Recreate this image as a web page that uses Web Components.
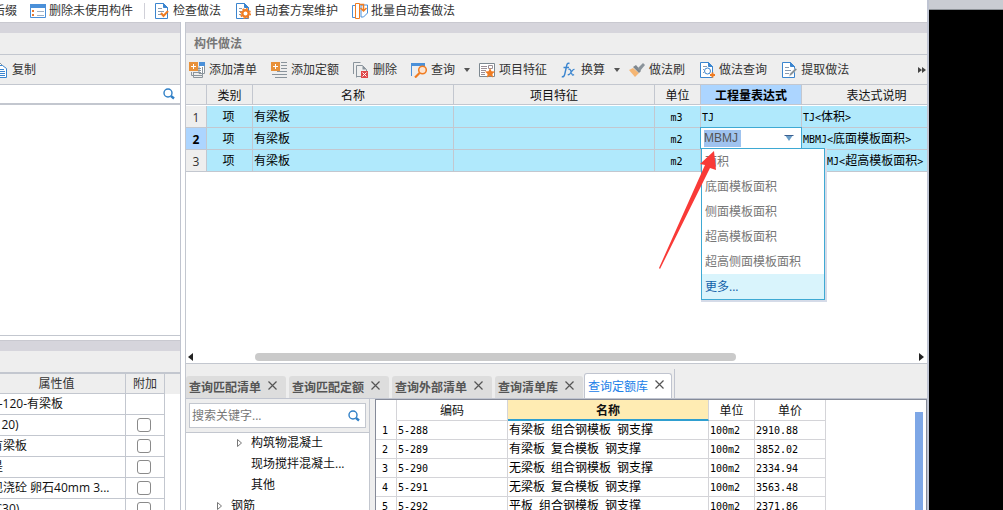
<!DOCTYPE html>
<html lang="zh-CN">
<head>
<meta charset="utf-8">
<title>构件做法</title>
<style>
html,body{margin:0;height:100%}
body{background:#fff;color:#222;font:12px/20px "Open Sans","Noto Sans CJK SC",sans-serif;overflow:hidden}
</style>
</head>
<body>
<qty-app></qty-app>
<script>
const BASE = `
*{box-sizing:border-box}
button,input{font:inherit;color:inherit;border:0;background:none;padding:0;margin:0;outline:0}
button{white-space:nowrap}
.m{font-family:"DejaVu Sans Mono",monospace;font-size:10px;line-height:1px}
table{border-spacing:0;table-layout:fixed}
td,th{padding:0;font-weight:400;white-space:nowrap}
`;
function define(name, css, html) {
  customElements.define(name, class extends HTMLElement {
    constructor() {
      super();
      this.attachShadow({mode: 'open'});
    }
    connectedCallback() {
      const body = typeof html === 'function' ? html(this) : html;
      this.shadowRoot.innerHTML = `<style>${BASE}${css}</style>${body}`;
    }
  });
}
const mono = s => s.replace(/[\x20-\x7e]+/g, r => `<span class="m">${r.replace(/</g, '&lt;').replace(/>/g, '&gt;')}</span>`);

const page = '<path d="M1.5 .5h8l4 4v11h-12z" fill="#fff" stroke="#3b85cf"/><path d="M9.500 .5v4h4z" fill="#3b85cf" stroke="#3b85cf"/>';
const ICONS = {
  list: '<path d="M.5 1.500h15v13H.5z" fill="#fff" stroke="#4a90d9"/><path d="M0 1h16v4H0z" fill="#4a90d9"/><path d="M2 7l2 2m0-2l-2 2m0 2l2 2m0-2l-2 2" stroke="#e8772e"/><path d="M7 8.500h7M7 12.500h7" stroke="#9fb0c4"/>',
  check: page + '<path d="M4 5.500h4M4 8.500h6M4 11.500h3" stroke="#8a9bb0"/><path d="M7 10l2.500 3L14 8" fill="none" stroke="#f07c22" stroke-width="2"/>',
  gear: page + '<path d="M4 5.500h3M4 8.500h3M4 11.500h2" stroke="#8a9bb0"/><circle cx="10.500" cy="10.500" r="3.200" fill="#fff" stroke="#f07c22" stroke-width="2.400"/><circle cx="10.500" cy="10.500" r="4.800" fill="none" stroke="#f07c22" stroke-width="1.500" stroke-dasharray="1.885 1.885"/>',
  batch: '<path d="M.5 2.500h3v12h-3zM15.500 2v8l-4 4H9V2z" fill="#fff" stroke="#4a90d9"/><path d="M3.500 .5h4v15h-4z" fill="#fff" stroke="#f07c22"/><path d="M7 1.500h4.500V7M8.500 5l3 3 3-3" fill="none" stroke="#f07c22" stroke-width="1.500"/>',
  copy: '<path d="M1.500 .5h6l3 3v9h-9z" fill="#fff" stroke="#8a949c"/><path d="M4.500 3.500h6l4 3v9h-10z" fill="#fff" stroke="#3b85cf"/><path d="M6 7.500h6M6 9.500h7M6 11.500h7M6 13.500h7" stroke="#3b85cf"/>',
  addlist: '<path d="M10 4.500v7h5.500V2" fill="#fff" stroke="#8a949c"/><path d="M10 0h6v4h-6z" fill="#4a90d9"/><path d="M4.500 10v5.500h9v-2M2.500 10v3.500h11V5M9 6.500h3M9 8.500h3M5 10.500h7" fill="none" stroke="#8a949c"/><path d="M0 0h9v9H0z" fill="#e8913a"/><path d="M4.500 2v5M2 4.500h5" stroke="#fff"/>',
  addnorm: '<path d="M10 .5h6M10 3.500h6M10 6.500h6M6 9.500h10M1 12.500h15M4 15.500h12" stroke="#8a949c"/><path d="M0 0h9v9H0z" fill="#e8913a"/><path d="M4.500 2v5M2 4.500h5" stroke="#fff"/>',
  del: '<path d="M.5 12V.5h7M3.500 15.500v-12h6l4 4V9M3.500 14.500H8" fill="none" stroke="#8a949c"/><path d="M9.500 3.500v4h4z" fill="#8a949c"/><path d="M8 9h7v7H8z" fill="#e0484a"/><path d="M9.500 10.500l4 4m0-4l-4 4" stroke="#fff"/>',
  query: '<path d="M.5 14V1.500h13V5" fill="none" stroke="#4a90d9"/><path d="M0 1h14v3H0z" fill="#4a90d9"/><circle cx="11.500" cy="8" r="3.800" fill="#fbe3d0" stroke="#f07c22" stroke-width="1.500"/><path d="M8.500 11L4 15.500" stroke="#f07c22" stroke-width="2.200"/>',
  feature: '<path d="M.5 1.500h15v13H.5z" fill="#fff" stroke="#7d8890"/><path d="M2 4.500h6M2 6.500h6M2 8.500h5M2 10.500h4M2 12.500h4M9.500 3.500h4v3h-4z" stroke="#9b8f96"/><path d="M11 6l1.500 3.200 3.500.4-2.600 2.400.7 3.500-3.100-1.700-3.100 1.700.7-3.500L6 9.600l3.500-.4z" fill="#f07c22"/>',
  fx: '<path d="M8.500 1.500Q6.500 .5 5.800 3L3.800 12Q3 15.500 .8 14.500M2.500 5.500h5.500" fill="none" stroke="#3b85cf" stroke-width="1.400"/><path d="M7.500 7.500q1.500-1 2.300 1.200l1 3.200q.6 2 2.200.6M13.500 7.500q-1-.5-2.200 1.200l-2.200 3q-1.200 1.500-2.400.8" fill="none" stroke="#3b85cf" stroke-width="1.300"/>',
  brush: '<path d="M0 8l4-2 6 5-4 4z" fill="#f5b674"/><path d="M4 5l3-2 5 6-2 2z" fill="#7f878e"/><path d="M8.500 6.500L14 1l2 2-5 6z" fill="#8b949b"/>',
  find: page + '<path d="M4 4.500h4M4 7.500h1M4 10.500h1" stroke="#8a9bb0"/><circle cx="8.500" cy="9" r="3" fill="#fff" stroke="#3b85cf"/><path d="M10.500 11.500l2 2" stroke="#3b85cf"/><path d="M13.500 10.500v5M11 13h5" stroke="#f07c22" stroke-width="2"/>',
  extract: page + '<path d="M4 5.500h4M4 8.500h6M4 11.500h4" stroke="#8a9bb0"/><path d="M8 14.500l1-3 5.500-5.500L16 7.500 10.500 13z" fill="#7d8890" stroke="#eee" stroke-width=".5"/>',
  search: '<circle cx="7" cy="7" r="4" fill="none" stroke="#2f7fc6" stroke-width="1.400"/><path d="M10 10l3 2.500" stroke="#2f7fc6" stroke-width="2.400"/>'
};

define('ui-icon', ':host{display:block;flex:none;width:16px;height:16px}svg{display:block;overflow:hidden}',
  el => `<svg width="16" height="16" viewBox="0 0 16 16" fill="none" aria-hidden="true">${ICONS[el.getAttribute('name')]}</svg>`);

define('tool-button', `
:host{display:block;flex:none;padding-right:14px}
:host([menu]){padding-right:9px}
button{display:flex;align-items:center;gap:var(--icon-gap,4px);height:20px;color:#333}
i{width:0;margin-left:5px;border:3px solid transparent;border-top:4px solid #555;border-bottom:0}
`, el => `<button type="button"><ui-icon name="${el.getAttribute('icon')}"></ui-icon><span><slot></slot></span>${el.hasAttribute('menu') ? '<i></i>' : ''}</button>`);

define('main-toolbar', `
:host{display:flex;align-items:center;height:22px;background:#fff;overflow:hidden;--icon-gap:3px}
.cut{margin-left:-7px;margin-right:13px;color:#333}
hr{flex:none;width:1px;height:16px;border:0;margin:0 9px 0 -3px;background:#d0d0d8}
`, `<button type="button" class="cut">后缀</button>
<tool-button icon="list">删除未使用构件</tool-button><hr>
<tool-button icon="check">检查做法</tool-button>
<tool-button icon="gear">自动套方案维护</tool-button>
<tool-button icon="batch">批量自动套做法</tool-button>`);

define('panel-head', `
:host{display:block;border-top:1px solid #c9c9d0}
.band{height:10px;background:#d6d5dc}
h2{margin:0;height:21px;background:#eee;color:#777;font-size:12px;font-weight:700;line-height:22px;padding-left:8px}
`, '<div class="band"></div><h2><slot></slot></h2>');

define('property-grid', `
:host{display:block;border-top:2px solid #c3c7cf;background:#fff}
.head{display:flow-root;background:#eee}
table{width:177px;margin-left:-12px;color:#111}
.v{width:138px}
th{height:20px;line-height:19px;color:#333;border:1px solid #c3c7cf;border-width:0 1px 1px 0;background:#eee}
td{height:21px;line-height:20px;border:1px solid #c3c7cf;border-width:0 1px 1px 0;padding-left:3px;overflow:hidden}
td:last-child{padding:0 2px 0 0}
input{appearance:none;display:block;width:14px;height:14px;margin:0 auto;border:1px solid #8a8a8a;border-radius:3px;background:#fff}
`, () => {
  const rows = ['B-120-有梁板', '(120)', '有梁板', '是', '现浇砼 卵石40mm 3...', '(C30)'];
  return `<div class="head"><table><colgroup><col class="v"><col></colgroup><thead><tr><th>属性值</th><th>附加</th></tr></thead></table></div>
  <table><colgroup><col class="v"><col></colgroup><tbody>${rows.map((r, i) => `<tr><td>${r}</td><td>${i ? `<input type="checkbox" aria-label="附加 ${r}">` : ''}</td></tr>`).join('')}</tbody></table>`;
});

define('side-panel', `
:host{display:grid;grid-template-rows:1fr 170px;border-right:1px solid #c0c4cf;min-height:0;overflow:hidden}
.top{display:flex;flex-direction:column;border-bottom:1px solid #c3c7cf;margin-bottom:4px;background:#fff}
.tools{display:flex;align-items:center;height:31px;background:#eee;border:1px solid #c3c7cf;border-width:1px 0;overflow:hidden}
.tools tool-button{margin-left:-8px}
.search{display:flex;align-items:center;height:20px;border-bottom:2px solid #c3c7cf;padding-right:3px}
.search input{flex:1;min-width:0}
`, `<section class="top"><panel-head></panel-head>
<div class="tools"><tool-button icon="copy">复制</tool-button></div>
<div class="search"><input type="text" aria-label="搜索构件"><ui-icon name="search"></ui-icon></div></section>
<section><panel-head></panel-head><property-grid></property-grid></section>`);

define('method-toolbar', `
:host{display:flex;align-items:center;height:31px;padding-left:3px;background:#eee;border:1px solid #c3c7cf;border-width:1px 0;overflow:hidden}
.more{margin-left:auto;display:flex;height:20px;align-items:center;padding-right:1px}
.more svg{display:block}
`, `<tool-button icon="addlist">添加清单</tool-button><tool-button icon="addnorm">添加定额</tool-button>
<tool-button icon="del">删除</tool-button><tool-button icon="query" menu>查询</tool-button>
<tool-button icon="feature">项目特征</tool-button><tool-button icon="fx" menu>换算</tool-button>
<tool-button icon="brush">做法刷</tool-button><tool-button icon="find">做法查询</tool-button>
<tool-button icon="extract">提取做法</tool-button>
<button type="button" class="more" aria-label="更多工具"><svg width="8" height="6"><path d="M0 0l4 3-4 3zM4 0l4 3-4 3z" fill="#444"/></svg></button>`);

define('expression-picker', `
:host{display:block;position:relative;height:22px;margin:-1px -1px 0 -1px;z-index:3}
.box{display:flex;align-items:center;height:22px;background:#fff;border:1px solid #3ea9d3;padding:0 7px 0 3px}
input{width:37px;height:17px;background:#9fc3ef;color:#555;line-height:17px;font-family:"Liberation Sans",sans-serif}
.box button{margin-left:auto;display:block}
.box svg{display:block}
ul{position:absolute;left:1px;top:21px;width:124px;margin:0;padding:0;list-style:none;background:#fff;border:1px solid #3ea9d3;box-shadow:1px 1px 0 1px #d5dbe8}
li{height:25px;line-height:25px;padding-left:3px;color:#777;text-align:left}
li[aria-selected]{background:#d9f4fc;color:#1261a9}
.arrow{position:absolute;left:-41px;top:23px;pointer-events:none}
`, `<div class="box"><input type="text" value="MBMJ" role="combobox" aria-expanded="true" aria-label="工程量表达式"><button type="button" aria-label="展开"><svg width="10" height="6"><path d="M1 0h8L5 6z" fill="#6b9fc9"/><path d="M0 0h10L9 1H1z" fill="#3b5f8f"/></svg></button></div>
<ul role="listbox" aria-label="工程量代码">${['面积', '底面模板面积', '侧面模板面积', '超高模板面积', '超高侧面模板面积'].map(t => `<li role="option">${t}</li>`).join('')}<li role="option" aria-selected="true">更多...</li></ul>
<svg class="arrow" width="60" height="122" aria-hidden="true"><path d="M55 1L41 14l5 1L0 118l1 1L51 18l6 2z" fill="#f93a37"/></svg>`);

define('method-grid', `
:host{display:flex;flex-direction:column;flex:1;min-height:0;background:#fff;border-bottom:1px solid #c3c7cf}
.wrap{flex:1;min-height:0;overflow:hidden}
table{width:calc(100% + 24px);color:#111}
th{height:20px;line-height:17px;padding-top:2px;background:#eee;border:1px solid #c3c7cf;border-width:0 1px 1px 0}
thead th{box-shadow:0 1px #fff}
tbody::before{content:"";display:block;height:1px}
td{height:22px;line-height:20px;background:#b0e9fc;border:1px solid #c3c7cf;border-width:0 1px 1px 0;padding-left:1px;color:#000}
tbody th{height:22px;color:#333}
.sel{background:#acd5ff;font-weight:700;color:#000}
.c{text-align:center;padding:0 2px 0 0}
.edit{padding:0}
th:last-child,td:last-child{border-right:0}
.scroll{display:grid;grid-template-columns:5px 1fr 5px;align-items:center;height:13px;margin:0 3px 0 2px}
.track{padding:0 183px 0 62px}
.thumb{height:8px;border-radius:4px;background:#cacaca}
.scroll svg{display:block}
`, () => {
  const rows = [['m3', 'TJ', 'TJ<体积>'], ['m2', null, 'MBMJ<底面模板面积>'], ['m2', '', 'CGMBMJ<超高模板面积>']];
  return `<div class="wrap"><table><colgroup><col style="width:21px"><col style="width:46px"><col style="width:201px"><col style="width:201px"><col style="width:46px"><col style="width:101px"><col></colgroup>
<thead><tr><th></th><th>类别</th><th>名称</th><th>项目特征</th><th>单位</th><th class="sel">工程量表达式</th><th>表达式说明</th></tr></thead>
<tbody>${rows.map((r, i) => `<tr><th class="${i === 1 ? 'sel' : ''}">${i + 1}</th><td class="c">项</td><td>有梁板</td><td></td><td class="c">${mono(r[0])}</td>${r[1] === null ? '<td class="edit"><expression-picker></expression-picker></td>' : `<td>${mono(r[1])}</td>`}<td>${mono(r[2])}</td></tr>`).join('')}</tbody></table></div>
<div class="scroll"><svg width="5" height="8"><path d="M5 0v8L0 4z" fill="#222"/></svg><div class="track"><div class="thumb"></div></div><svg width="5" height="8"><path d="M0 0v8l5-4z" fill="#222"/></svg></div>`;
});

define('query-tab', `
:host{display:flex;align-items:center;height:22px;padding:1px 9px 0 3px;background:#ddd;border-radius:3px 3px 0 0;color:#555;gap:7px;font-weight:700}
:host([active]){height:25px;background:#fff;color:#2080e8;border:1px solid #c0c4cf;border-bottom:0;padding:1px 7px 0 3px;margin-left:-2px;font-weight:400}
button{display:block;height:20px}
.x svg{display:block;margin-bottom:4px}
.x{display:flex;align-items:center}
`, el => `<button type="button" role="tab" aria-selected="${el.hasAttribute('active')}"><slot></slot></button><button type="button" class="x" aria-label="关闭"><svg width="9" height="9"><path d="M.5 .5l8 8m0-8l-8 8" stroke="#555" stroke-width="1.200"/></svg></button>`);

define('query-tabs', `
:host{display:flex;align-items:flex-end;gap:3px;height:35px;background:#eee;border-bottom:1px solid #c0c4cf}
hr{width:1px;height:29px;border:0;margin:0 0 0 -1px;background:#c0c4cf}
`, `<query-tab>查询匹配清单</query-tab><query-tab>查询匹配定额</query-tab><query-tab>查询外部清单</query-tab><query-tab>查询清单库</query-tab><query-tab active>查询定额库</query-tab><hr>`);

define('chapter-tree', `
:host{display:block;border-right:1px solid #c3c7cf;background:#fff;min-height:0;overflow:hidden}
.find{background:#eee;padding:4px 3px 4px;border-bottom:1px solid #c3c7cf}
label{display:flex;align-items:center;height:25px;border:1px solid #c3c7cf;background:#fff;padding:0 3px 0 2px}
input{flex:1;min-width:0;color:#777}
input::placeholder{color:#777;opacity:1}
ul{list-style:none;margin:0;padding:0 0 0 51px;color:#111}
ul.parent{padding-left:31px}
li div{display:flex;align-items:center;height:21px;gap:8px;line-height:18px;padding-bottom:2px}
svg{flex:none;display:block}
`, () => {
  const tri = '<svg width="6" height="8"><path d="M.5 .5v7l4-3.500z" fill="none" stroke="#777"/></svg>';
  const gap = '<svg width="6" height="8"></svg>';
  return `<div class="find"><label><input type="text" placeholder="搜索关键字..." aria-label="搜索关键字"><ui-icon name="search"></ui-icon></label></div>
<ul><li><div>${tri}构筑物混凝土</div></li><li><div>${gap}现场搅拌混凝土...</div></li><li><div>${gap}其他</div></li></ul>
<ul class="parent"><li><div>${tri}钢筋</div></li></ul>`;
});

define('norm-grid', `
:host{display:grid;grid-template-columns:1fr 8px;border:1px solid #858a98;border-width:1px 1px 0 1px;background:#fff;padding-right:3px;min-height:0;overflow:hidden}
table{width:450px;color:#000}
th{height:21px;line-height:18px;padding-top:2px;border:1px solid #d4d4d8;border-width:0 1px 1px 0;color:#111}
td{height:19px;line-height:18px;border:1px solid #d4d4d8;border-width:0 1px 1px 0;padding-left:1px}
td:first-child{text-align:center;padding:0 2px 0 0}
th.sel{background:#ffecb3;font-weight:700;line-height:17px;border-bottom:2px solid #2f9fd0}
thead th:first-child{border-bottom-color:#fff}
.bar{background:#7ea7e6;margin-top:12px}
`, () => {
  const rows = [['5-288', '有梁板 组合钢模板 钢支撑', '2910.88'], ['5-289', '有梁板 复合模板 钢支撑', '3852.02'], ['5-290', '无梁板 组合钢模板 钢支撑', '2334.94'], ['5-291', '无梁板 复合模板 钢支撑', '3563.48'], ['5-292', '平板 组合钢模板 钢支撑', '2371.86']];
  return `<div><table><colgroup><col style="width:21px"><col style="width:111px"><col style="width:201px"><col style="width:46px"><col style="width:71px"></colgroup>
<thead><tr><th></th><th>编码</th><th class="sel">名称</th><th>单位</th><th>单价</th></tr></thead>
<tbody>${rows.map((r, i) => `<tr><td>${mono(String(i + 1))}</td><td>${mono(r[0])}</td><td>${mono(r[1])}</td><td>${mono('100m2')}</td><td>${mono(r[2])}</td></tr>`).join('')}</tbody></table></div><div class="bar"></div>`;
});

define('work-panel', `
:host{display:grid;grid-template-rows:1fr 146px;min-width:0;min-height:0;border-left:1px solid #c3c7cf;overflow:hidden}
.top{display:flex;flex-direction:column;min-height:0;min-width:0}
.low{display:grid;grid-template-rows:35px 1fr;min-height:0;background:#eee}
.split{display:grid;grid-template-columns:184px 1fr;gap:5px;min-height:0}
`, `<section class="top"><panel-head>构件做法</panel-head><method-toolbar></method-toolbar><method-grid></method-grid></section>
<section class="low"><query-tabs></query-tabs><div class="split"><chapter-tree></chapter-tree><norm-grid></norm-grid></div></section>`);

define('canvas-view', `
:host{display:block;background:#000;border-top:9px solid #c9ccd2;box-shadow:inset 0 1px #8d9297}
`, '');

define('qty-app', `
:host{display:grid;grid-template-columns:1fr 74px;height:100vh;overflow:hidden}
main{display:grid;grid-template-rows:22px 1fr;min-width:0;min-height:0;border-right:2px solid #bfc4d2}
.cols{display:grid;grid-template-columns:181px 1fr;gap:4px;min-height:0;min-width:0}
`, `<main><main-toolbar></main-toolbar><div class="cols"><side-panel></side-panel><work-panel></work-panel></div></main><canvas-view></canvas-view>`);
</script>
</body>
</html>
